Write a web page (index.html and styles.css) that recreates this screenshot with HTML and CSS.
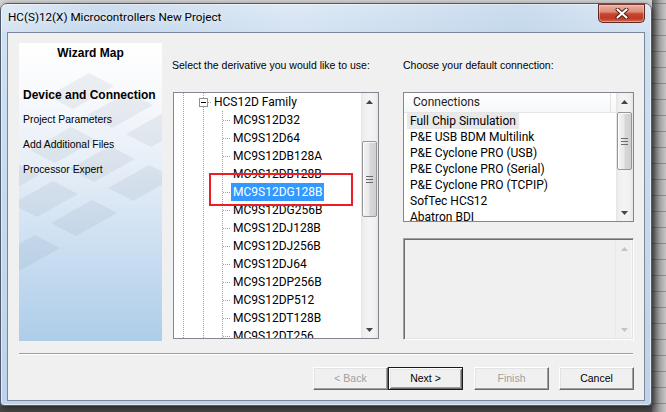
FILE: index.html
```html
<!DOCTYPE html>
<html lang="en">
<head>
<meta charset="utf-8">
<title>HC(S)12(X) Microcontrollers New Project</title>
<link rel="stylesheet" href="styles.css">
</head>
<body>
<div class="desktop">
  <div class="window">
    <div class="titlebar">
      <span class="title">HC(S)12(X) Microcontrollers New Project</span>
      <button class="close" aria-label="Close">
        <svg width="14" height="11" viewBox="0 0 14 11">
          <path d="M2.5 1.5 L11.5 9.5 M11.5 1.5 L2.5 9.5" stroke="#4a1b12" stroke-width="4" stroke-linecap="round"/>
          <path d="M2.5 1.5 L11.5 9.5 M11.5 1.5 L2.5 9.5" stroke="#ffffff" stroke-width="2.2" stroke-linecap="round"/>
        </svg>
      </button>
    </div>
    <div class="client">
      <div class="main">
        <div class="wizard">
          <svg class="wizard-bg" width="143" height="298" viewBox="0 0 143 298">
            <g fill="rgba(80,100,130,0.085)">
              <polygon points="34,138 59,151 18,174 -7,161"/>
              <polygon points="73,157 98,170 57,193 32,180"/>
              <polygon points="16,192 41,205 0,228 -25,215"/>
              <polygon points="130,122 155,135 114,158 89,145"/>
              <polygon points="91,103 116,116 75,139 50,126"/>
              <polygon points="52,84 77,97 36,120 11,107"/>
              <polygon points="109,49 134,62 93,85 68,72"/>
              <polygon points="148,68 173,81 132,104 107,91"/>
              <polygon points="70,30 95,43 54,66 29,53"/>
              <polygon points="-5,119 20,132 -21,155 -46,142"/>
            </g>
          </svg>
          <div class="wizard-title">Wizard Map</div>
          <ul class="steps">
            <li class="step current">Device and Connection</li>
            <li class="step">Project Parameters</li>
            <li class="step">Add Additional Files</li>
            <li class="step">Processor Expert</li>
          </ul>
        </div>

        <div class="col-mid">
          <div class="label">Select the derivative you would like to use:</div>
          <div class="tree">
            <div class="tree-rows">
              <div class="node"><span class="guide g1"></span><span class="guide g2 expander"><span class="toggle"><span class="minus"></span></span></span><span class="node-text fam">HCS12D Family</span></div>
              <div class="node"><span class="guide g1"></span><span class="guide g2"></span><span class="guide g3"></span><span class="node-text">MC9S12D32</span></div>
              <div class="node"><span class="guide g1"></span><span class="guide g2"></span><span class="guide g3"></span><span class="node-text">MC9S12D64</span></div>
              <div class="node"><span class="guide g1"></span><span class="guide g2"></span><span class="guide g3"></span><span class="node-text">MC9S12DB128A</span></div>
              <div class="node"><span class="guide g1"></span><span class="guide g2"></span><span class="guide g3"></span><span class="node-text">MC9S12DB128B</span></div>
              <div class="node"><span class="guide g1"></span><span class="guide g2"></span><span class="guide g3"></span><span class="node-text selected">MC9S12DG128B</span></div>
              <div class="node"><span class="guide g1"></span><span class="guide g2"></span><span class="guide g3"></span><span class="node-text">MC9S12DG256B</span></div>
              <div class="node"><span class="guide g1"></span><span class="guide g2"></span><span class="guide g3"></span><span class="node-text">MC9S12DJ128B</span></div>
              <div class="node"><span class="guide g1"></span><span class="guide g2"></span><span class="guide g3"></span><span class="node-text">MC9S12DJ256B</span></div>
              <div class="node"><span class="guide g1"></span><span class="guide g2"></span><span class="guide g3"></span><span class="node-text">MC9S12DJ64</span></div>
              <div class="node"><span class="guide g1"></span><span class="guide g2"></span><span class="guide g3"></span><span class="node-text">MC9S12DP256B</span></div>
              <div class="node"><span class="guide g1"></span><span class="guide g2"></span><span class="guide g3"></span><span class="node-text">MC9S12DP512</span></div>
              <div class="node"><span class="guide g1"></span><span class="guide g2"></span><span class="guide g3"></span><span class="node-text">MC9S12DT128B</span></div>
              <div class="node"><span class="guide g1"></span><span class="guide g2"></span><span class="guide g3"></span><span class="node-text">MC9S12DT256</span></div>
            </div>
            <div class="vscroll">
              <div class="sb-btn"><svg width="7" height="4" viewBox="0 0 7 4"><polygon points="0,4 3.5,0 7,4" fill="#454545"/></svg></div>
              <div class="sb-gap tree-gap"></div>
              <div class="thumb tree-thumb"><svg width="7" height="7" viewBox="0 0 7 7"><path d="M0 0.5h7M0 3.5h7M0 6.5h7" stroke="#6a6a6a"/></svg></div>
              <div class="sb-fill"></div>
              <div class="sb-btn"><svg width="7" height="4" viewBox="0 0 7 4"><polygon points="0,0 7,0 3.5,4" fill="#454545"/></svg></div>
            </div>
            <div class="annot"></div>
          </div>
        </div>

        <div class="col-right">
          <div class="label">Choose your default connection:</div>
          <div class="listview">
            <div class="lv-main">
              <div class="lv-header"><div class="lv-col">Connections</div></div>
              <div class="lv-rows">
                <div class="lv-row"><span class="lv-item selected">Full Chip Simulation</span></div>
                <div class="lv-row"><span class="lv-item">P&amp;E USB BDM Multilink</span></div>
                <div class="lv-row"><span class="lv-item">P&amp;E Cyclone PRO (USB)</span></div>
                <div class="lv-row"><span class="lv-item">P&amp;E Cyclone PRO (Serial)</span></div>
                <div class="lv-row"><span class="lv-item">P&amp;E Cyclone PRO (TCPIP)</span></div>
                <div class="lv-row"><span class="lv-item">SofTec HCS12</span></div>
                <div class="lv-row"><span class="lv-item">Abatron BDI</span></div>
              </div>
            </div>
            <div class="vscroll">
              <div class="sb-btn"><svg width="7" height="4" viewBox="0 0 7 4"><polygon points="0,4 3.5,0 7,4" fill="#454545"/></svg></div>
              <div class="sb-gap lv-gap"></div>
              <div class="thumb lv-thumb"><svg width="7" height="7" viewBox="0 0 7 7"><path d="M0 0.5h7M0 3.5h7M0 6.5h7" stroke="#6a6a6a"/></svg></div>
              <div class="sb-fill"></div>
              <div class="sb-btn"><svg width="7" height="4" viewBox="0 0 7 4"><polygon points="0,0 7,0 3.5,4" fill="#454545"/></svg></div>
            </div>
          </div>
          <div class="infobox">
            <div class="info-body"></div>
            <div class="vscroll disabled">
              <div class="sb-btn"><svg width="7" height="4" viewBox="0 0 7 4"><polygon points="0,4 3.5,0 7,4" fill="#c2c2c2"/></svg></div>
              <div class="sb-fill"></div>
              <div class="sb-btn"><svg width="7" height="4" viewBox="0 0 7 4"><polygon points="0,0 7,0 3.5,4" fill="#c2c2c2"/></svg></div>
            </div>
          </div>
        </div>
      </div>

      <div class="separator"></div>

      <div class="actions">
        <button class="btn" disabled>&lt; Back</button>
        <button class="btn default">Next &gt;</button>
        <button class="btn finish" disabled>Finish</button>
        <button class="btn cancel">Cancel</button>
      </div>
    </div>
  </div>
</div>
</body>
</html>
```

FILE: styles.css
```css
* { box-sizing: border-box; margin: 0; padding: 0; }

html, body {
  width: 666px;
  height: 412px;
  overflow: hidden;
}

body {
  font-family: "Liberation Sans", Arial, sans-serif;
  color: #000;
  background: #c8c8c8;
}

.desktop {
  width: 666px;
  height: 412px;
  padding-top: 3px;
  display: flex;
  align-items: flex-start;
  background:
    repeating-linear-gradient(to bottom, transparent 0 3px, rgba(50, 50, 50, 0.35) 3px 4px, transparent 4px 16px) right 0 top 0 / 14px 100% no-repeat,
    linear-gradient(to right, #5e5e5e, #a6a6a6 60%, #c6c6c6) right 0 top 0 / 14px 100% no-repeat,
    linear-gradient(to bottom, #d4d4d4 0, #c4c4c4 392px, #4e4e4e 406px, #484848 100%);
}

/* ---------- window frame ---------- */
.window {
  width: 652px;
  height: 403px;
  flex: none;
  display: flex;
  flex-direction: column;
  padding: 0 6px 4px 6px;
  border: 1px solid #4d5b6c;
  border-radius: 7px 7px 4px 4px;
  background: linear-gradient(to bottom, #dbe7f4 0, #cfe0f1 28px, #c4d8ee 60%, #bcd3eb 100%);
  box-shadow: inset 0 0 0 1px rgba(255, 255, 255, 0.55), 1px 2px 7px rgba(0, 0, 0, 0.55);
}

.titlebar {
  height: 28px;
  flex: none;
  display: flex;
  align-items: flex-start;
  background: linear-gradient(to right, rgba(255,255,255,0.15), rgba(150,180,215,0.18) 15%, rgba(255,255,255,0.1) 45%, rgba(150,180,215,0.2) 80%, rgba(255,255,255,0.1));
  margin: 0 -6px;
  padding: 0 6px;
}

.title {
  padding-top: 6px;
  padding-left: 1px;
  font: 11.7px/14px Roboto, "Liberation Sans", sans-serif;
  color: #000;
  text-shadow: 0 0 6px rgba(255, 255, 255, 0.9);
  white-space: nowrap;
}

.close {
  margin-left: auto;
  width: 47px;
  height: 19px;
  flex: none;
  display: flex;
  align-items: center;
  justify-content: center;
  border: 1px solid #5e2a22;
  border-top-color: #7a3a30;
  border-radius: 0 0 5px 5px;
  background: linear-gradient(to bottom, #eab0a2 0, #de8c79 40%, #c8452f 52%, #c03a25 78%, #d6674f 100%);
  box-shadow: inset 0 0 0 1px rgba(255, 220, 210, 0.45);
}

/* ---------- client area ---------- */
.client {
  height: 369px;
  flex: none;
  border: 1px solid #7b8899;
  background: #f0f0f0;
  padding: 10px 10px 10px 11px;
  display: flex;
  flex-direction: column;
}

.main {
  height: 298px;
  flex: none;
  display: flex;
}

/* wizard map */
.wizard {
  position: relative;
  width: 143px;
  height: 298px;
  flex: none;
  overflow: hidden;
  padding-top: 3px;
  background: linear-gradient(to bottom, #ffffff 0, #f7f9fc 18%, #e3ecf6 45%, #c8ddf1 72%, #aecde9 100%);
}

.wizard-bg {
  position: absolute;
  left: 0;
  top: 0;
}

.wizard-title {
  position: relative;
  text-align: center;
  font: bold 12px/14px "Liberation Sans", Arial, sans-serif;
}

.steps {
  position: relative;
  list-style: none;
  margin-top: 28px;
  padding-left: 4px;
  display: flex;
  flex-direction: column;
  gap: 11px;
}

.step {
  font: 10.4px/14px "Liberation Sans", Arial, sans-serif;
  white-space: nowrap;
}

.step.current {
  font-weight: bold;
  font-size: 12px;
}

/* middle column */
.col-mid {
  width: 207px;
  flex: none;
  margin-left: 10px;
  display: flex;
  flex-direction: column;
}

.label {
  height: 14px;
  margin-top: 15px;
  font: 10.5px/14px "Liberation Sans", Arial, sans-serif;
  white-space: nowrap;
}

.tree {
  position: relative;
  margin-top: 20px;
  margin-left: 1px;
  width: 206px;
  height: 247px;
  border: 1px solid #828790;
  background: #fff;
  display: flex;
  overflow: hidden;
}

.tree-rows {
  flex: 1;
  overflow: hidden;
  display: flex;
  flex-direction: column;
}

.node {
  height: 18px;
  flex: none;
  display: flex;
  font: 12px/18px Roboto, "Liberation Sans", sans-serif;
  white-space: nowrap;
}

.guide {
  height: 18px;
  flex: none;
  background-repeat: no-repeat;
  background-image: repeating-linear-gradient(to bottom, #a0a0a0 0 1px, transparent 1px 2px);
  background-size: 1px 18px;
}

.g1 { width: 19px; background-position: 9px 0; }
.g2 { width: 19px; background-position: 10px 0; }
.g3 {
  width: 19px;
  background-image:
    repeating-linear-gradient(to bottom, #a0a0a0 0 1px, transparent 1px 2px),
    repeating-linear-gradient(to right, #a0a0a0 0 1px, transparent 1px 2px);
  background-size: 1px 18px, 8px 1px;
  background-position: 10px 0, 11px 9px;
}

.expander {
  display: flex;
  align-items: flex-start;
  background-image:
    repeating-linear-gradient(to bottom, #a0a0a0 0 1px, transparent 1px 2px),
    repeating-linear-gradient(to right, #a0a0a0 0 1px, transparent 1px 2px);
  background-size: 1px 18px, 5px 1px;
  background-position: 10px 0, 15px 9px;
}

.toggle {
  width: 9px;
  height: 9px;
  margin-top: 5px;
  margin-left: 6px;
  border: 1px solid #919191;
  background: #fff;
  display: flex;
  align-items: center;
  justify-content: center;
}

.minus {
  width: 5px;
  height: 1px;
  background: #000;
}

.node-text {
  padding: 0 2px;
  color: #000;
}

.node-text.fam { padding-left: 2px; }

.node-text.selected {
  background: #3399ff;
  color: #fff;
}

.annot {
  position: absolute;
  left: 35px;
  top: 80px;
  width: 144px;
  height: 33px;
  border: 2px solid #ee1c24;
}

/* scrollbars */
.vscroll {
  width: 17px;
  flex: none;
  display: flex;
  flex-direction: column;
  background: linear-gradient(to right, #e4e4e4, #efefef 15%, #f4f4f4 50%, #efefef 85%, #e4e4e4);
}

.sb-btn {
  height: 17px;
  flex: none;
  display: flex;
  align-items: center;
  justify-content: center;
}

.sb-fill { flex: 1; }

.thumb {
  flex: none;
  margin: 0 1px;
  border: 1px solid #979797;
  border-radius: 2px;
  background: linear-gradient(to right, #f4f4f4, #e8e8e8 48%, #d8d8d8 52%, #cfcfcf);
  box-shadow: inset 1px 1px 0 rgba(255, 255, 255, 0.8);
  display: flex;
  align-items: center;
  justify-content: center;
}

.tree-gap { height: 31px; flex: none; }
.tree-thumb { height: 76px; }
.lv-gap { height: 2px; flex: none; }
.lv-thumb { height: 58px; }

.vscroll.disabled {
  background: #f0f0f0;
  border-left: 1px solid #e8e8e8;
  box-shadow: inset -1px 0 0 #f8f8f8;
}

/* right column */
.col-right {
  width: 231px;
  flex: none;
  margin-left: 24px;
  display: flex;
  flex-direction: column;
}

.listview {
  margin-top: 20px;
  height: 130px;
  border: 1px solid #828790;
  background: #fff;
  display: flex;
  overflow: hidden;
}

.lv-main {
  flex: 1;
  overflow: hidden;
  display: flex;
  flex-direction: column;
}

.lv-header {
  height: 20px;
  flex: none;
  border-bottom: 1px solid #e5e5e5;
  background: linear-gradient(to bottom, #ffffff, #f6f7f9);
  display: flex;
}

.lv-col {
  width: 207px;
  border-right: 1px solid #e2e3e5;
  padding-left: 9px;
  font: 12px/19px Roboto, "Liberation Sans", sans-serif;
  color: #1e1e1e;
}

.lv-rows {
  display: flex;
  flex-direction: column;
}

.lv-row {
  height: 16px;
  flex: none;
  padding-left: 3px;
  display: flex;
  font: 12px/16px Roboto, "Liberation Sans", sans-serif;
  white-space: nowrap;
}

.lv-item { padding: 0 3px; }

.lv-item.selected { background: #e8e8e8; }

.infobox {
  margin-top: 16px;
  height: 102px;
  display: flex;
  background: #f0f0f0;
  border: 1px solid;
  border-color: #a0a0a0 #ffffff #ffffff #a0a0a0;
  box-shadow: inset 1px 1px 0 #6d6d6d, inset -1px -1px 0 #e3e3e3;
  padding: 1px;
}

.info-body { flex: 1; }

/* separator and buttons */
.separator {
  height: 2px;
  flex: none;
  margin-top: 12px;
  margin-right: 1px;
  border-top: 1px solid #a0a0a0;
  border-bottom: 1px solid #ffffff;
}

.actions {
  margin-top: 12px;
  height: 23px;
  display: flex;
  justify-content: flex-end;
}

.btn {
  width: 75px;
  height: 23px;
  flex: none;
  font: 10.5px/1 "Liberation Sans", Arial, sans-serif;
  color: #000;
  background: #f0f0f0;
  border: 1px solid;
  border-color: #ffffff #696969 #696969 #ffffff;
  box-shadow: inset -1px -1px 0 #a0a0a0, inset 1px 1px 0 #e3e3e3;
}

.btn:disabled { color: #a0a0a0; }

.btn.default {
  border-color: #1a1a1a;
  box-shadow: inset 1px 1px 0 #ffffff, inset -1px -1px 0 #696969, inset 2px 2px 0 #e3e3e3, inset -2px -2px 0 #a0a0a0;
}

.btn.finish { margin-left: 11px; }
.btn.cancel { margin-left: 10px; }
```
